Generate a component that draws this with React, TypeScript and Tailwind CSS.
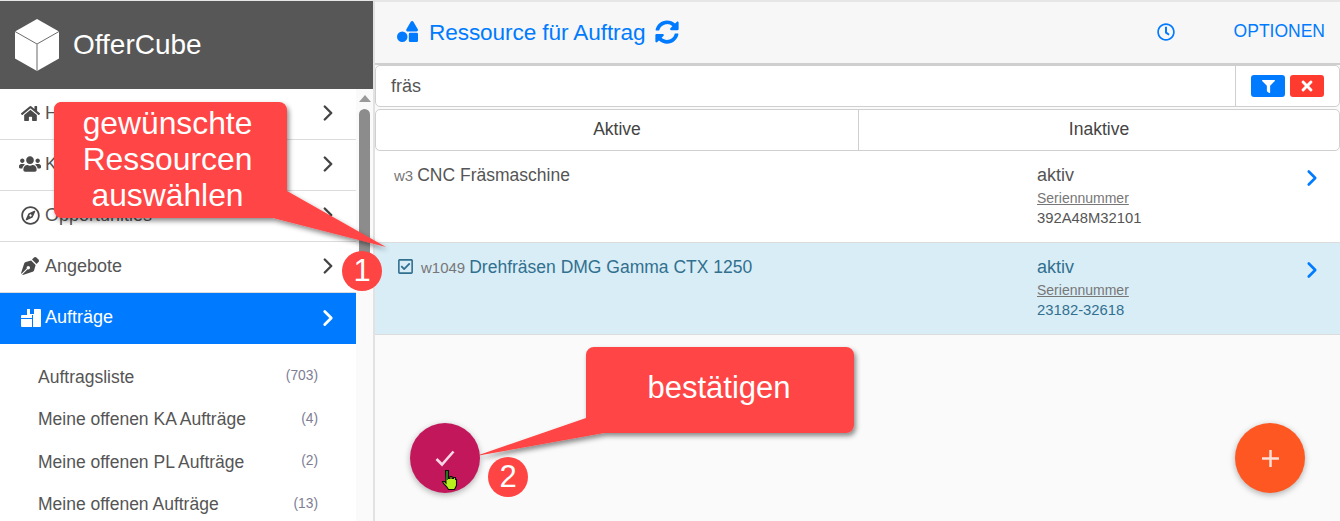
import { ChevronRight } from "lucide-react";
import {
    FaFilter,
    FaHome,
    FaPenNib,
    FaRegCheckSquare,
    FaRegClock,
    FaRegCompass,
    FaShapes,
    FaSyncAlt,
    FaTimes,
    FaUsers,
} from "react-icons/fa";

const CubeLogo = () => (
    <svg width="46" height="54" viewBox="0 0 46 54" className="shrink-0">
        <path d="M23 1 45 13.5V40.5L23 53 1 40.5V13.5Z" fill="#fff" />
        <path d="M1 13.5 23 26 45 13.5" fill="none" stroke="#6b6b6b" strokeWidth="1" />
        <path d="M23 26V53" fill="none" stroke="#a0a0a0" strokeWidth="1.6" />
    </svg>
);

const OrdersIcon = () => (
    <svg width="20" height="20" viewBox="0 0 20 20" className="shrink-0">
        <path d="M6 1h3v5h4V1h6a1 1 0 0 1 1 1v16a1 1 0 0 1-1 1h-7V7H6Z" fill="#fff" />
        <path d="M1 7h10v3H0V8a1 1 0 0 1 1-1Z" fill="#fff" />
        <path d="M0 11h11v8H1a1 1 0 0 1-1-1Z" fill="#fff" />
    </svg>
);

const HandCursor = () => (
    <svg width="17" height="22" viewBox="0 0 17 22" className="absolute left-[441px] top-[469px]">
        <path
            d="M4.5 1.5h3v8h1.5V7.5h2v2h1.500V8.500h2v2h1v6l-2 4H7.500l-2-3-3-3-1-2h2l1.500 1.500Z"
            fill="#b7f01c"
            stroke="#0c0c0c"
            strokeWidth="1.1"
        />
        <path d="M5 2h2v9H5Z" fill="#1f7a1f" />
    </svg>
);

const Annotations = () => (
    <svg width="1340" height="521" viewBox="0 0 1340 521" className="absolute left-0 top-0 pointer-events-none">
        <defs>
            <filter id="shade" x="-20%" y="-20%" width="140%" height="140%">
                <feDropShadow dx="2" dy="3" stdDeviation="2.500" floodColor="#000" floodOpacity="0.45" />
            </filter>
        </defs>
        <path
            d="M60 102h219a8 8 0 0 1 8 8v81L386 247 273 218H62a8 8 0 0 1-8-8v-100a8 8 0 0 1 6-8Z"
            fill="#ff4444"
            filter="url(#shade)"
        />
        <path
            d="M594 347h252a8 8 0 0 1 8 8v70a8 8 0 0 1-8 8H604L476 456 586 418V355a8 8 0 0 1 8-8Z"
            fill="#ff4444"
            filter="url(#shade)"
        />
    </svg>
);

const menu = [
    { label: "Home", icon: <FaHome size={19} /> },
    { label: "Kunden", icon: <FaUsers size={22} className="-ml-[2px] mr-[-1px]" /> },
    { label: "Opportunities", icon: <FaRegCompass size={19} /> },
    { label: "Angebote", icon: <FaPenNib size={18} /> },
];

const subMenu = [
    { label: "Auftragsliste", count: "(703)" },
    { label: "Meine offenen KA Aufträge", count: "(4)" },
    { label: "Meine offenen PL Aufträge", count: "(2)" },
    { label: "Meine offenen Aufträge", count: "(13)" },
];

const resources = [
    {
        code: "w3",
        name: "CNC Fräsmaschine",
        serial: "392A48M32101",
        selected: false,
    },
    {
        code: "w1049",
        name: "Drehfräsen DMG Gamma CTX 1250",
        serial: "23182-32618",
        selected: true,
    },
];

const App = () => {
    return (
        <div className="relative flex h-[521px] w-[1340px] overflow-hidden bg-[#fafafa] font-['Liberation_Sans',Arial,sans-serif] text-[#555]">
            <aside className="flex h-full w-[375px] shrink-0 flex-col border-r-2 border-[#e2e2e2] bg-white">
                <div className="flex h-[89px] shrink-0 items-center gap-[13px] border-t border-[#e6e6e6] bg-[#575757] pl-[14px] text-[28px] text-white">
                    <CubeLogo />
                    <span>OfferCube</span>
                </div>
                <div className="flex min-h-0 flex-1">
                    <nav className="w-[356px] shrink-0">
                        {menu.map((item) => (
                            <div
                                key={item.label}
                                className="flex h-[51px] items-center border-b border-[#dcdcdc] pb-[2px] pl-[21px] pr-[15px] text-[18px] text-[#555]"
                            >
                                <span className="flex w-[24px] shrink-0 text-[#4a4a4a]">{item.icon}</span>
                                <span className="flex-1">{item.label}</span>
                                <ChevronRight size={26} strokeWidth={2.2} className="text-[#444]" />
                            </div>
                        ))}
                        <div className="flex h-[51px] items-center bg-[#007bff] pb-[2px] pl-[21px] pr-[15px] text-[18px] text-white">
                            <span className="flex w-[24px] shrink-0">
                                <OrdersIcon />
                            </span>
                            <span className="flex-1">Aufträge</span>
                            <ChevronRight size={26} strokeWidth={2.6} />
                        </div>
                        <div className="pt-[11.5px]">
                            {subMenu.map((item) => (
                                <div
                                    key={item.label}
                                    className="flex h-[42.5px] items-center pl-[38px] pr-[38px] text-[17.5px] text-[#555]"
                                >
                                    <span className="flex-1">{item.label}</span>
                                    <span className="text-[13.8px] text-[#7d7d93]">{item.count}</span>
                                </div>
                            ))}
                        </div>
                    </nav>
                    <div className="flex flex-1 flex-col items-center bg-[#fafafa] pt-[6px]">
                        <div className="h-0 w-0 border-x-[6px] border-b-[7px] border-x-transparent border-b-[#9a9a9a]" />
                        <div className="mt-[7px] h-[160px] w-[11px] rounded-full bg-[#8c8c8c]" />
                    </div>
                </div>
            </aside>
            <main className="flex min-w-0 flex-1 flex-col">
                <header className="flex h-[65px] shrink-0 items-center border-y-2 border-b-[#cfcfcf] border-t-[#e6e6e6] bg-[#f7f7f7] pb-[2px] pl-[22px] pr-[15px] text-[#007bff]">
                    <FaShapes size={21} className="mr-[11px]" />
                    <span className="translate-y-[1px] text-[22.6px] tracking-[-0.1px]">Ressource für Auftrag</span>
                    <FaSyncAlt size={24} className="ml-[10px]" />
                    <FaRegClock size={18} className="ml-auto" />
                    <span className="ml-[59px] text-[17.5px]">OPTIONEN</span>
                </header>
                <div className="flex h-[42px] shrink-0 rounded-[5px] border border-[#cfcfcf] bg-white">
                    <div className="flex flex-1 items-center pl-[15px] text-[18px]">fräs</div>
                    <div className="flex w-[104px] items-center gap-[5px] border-l border-[#cfcfcf] pl-[15px]">
                        <span className="flex h-[22px] w-[34px] items-center justify-center rounded-[3px] bg-[#007bff] text-white">
                            <FaFilter size={13} />
                        </span>
                        <span className="flex h-[22px] w-[34px] items-center justify-center rounded-[3px] bg-[#ff3b30] text-white">
                            <FaTimes size={16} />
                        </span>
                    </div>
                </div>
                <div className="mt-[2px] flex h-[42px] shrink-0 rounded-[5px] border border-[#cfcfcf] bg-white text-[17.5px] text-[#444]">
                    <div className="flex w-[483px] items-center justify-center border-r border-[#cfcfcf] pb-[2px]">Aktive</div>
                    <div className="flex flex-1 items-center justify-center pb-[2px]">Inaktive</div>
                </div>
                {resources.map((row) => (
                    <div
                        key={row.code}
                        className={
                            row.selected
                                ? "flex h-[92px] shrink-0 border-b border-[#dcdcdc] bg-[#d9edf7] pl-[22px] pr-[15px] pt-[14px] text-[#31708f]"
                                : "flex h-[92px] shrink-0 border-b border-[#dcdcdc] bg-white pl-[19px] pr-[15px] pt-[14px] text-[#555]"
                        }
                    >
                        <div
                            className={
                                row.selected
                                    ? "flex w-[640px] items-center self-start whitespace-nowrap text-[17.5px] leading-[21px]"
                                    : "flex w-[643px] items-center self-start whitespace-nowrap text-[17.5px] leading-[21px]"
                            }
                        >
                            {row.selected && <FaRegCheckSquare size={17} className="mr-[7px] -mt-[3px]" />}
                            <span className="mr-[4px] text-[15px] text-[#777]">{row.code}</span>
                            <span>{row.name}</span>
                        </div>
                        <div className="flex-1">
                            <div className="text-[18px] leading-[21px]">aktiv</div>
                            <div className="mt-[3px] text-[14px] leading-[18px] text-[#777] underline">Seriennummer</div>
                            <div className="mt-[1px] text-[14.8px] leading-[20px]">{row.serial}</div>
                        </div>
                        <ChevronRight size={26} strokeWidth={2.4} className="text-[#007bff]" />
                    </div>
                ))}
            </main>
            <Annotations />
            <div className="absolute left-[54px] top-[104.5px] w-[227px] text-center text-[31.8px] leading-[36.4px] text-white">
                gewünschte Ressourcen auswählen
            </div>
            <div className="absolute left-[342px] top-[251px] flex h-[40px] w-[40px] items-center justify-center rounded-full bg-[#ff4444] text-[31px] text-white">
                1
            </div>
            <div className="absolute left-[586px] top-[370px] w-[266px] text-center text-[31px] leading-[36px] text-white">
                bestätigen
            </div>
            <button className="absolute left-[410px] top-[423px] flex h-[70px] w-[70px] items-center justify-center rounded-full bg-[#c2185b] text-[#f8d7e6] shadow-[0_2px_6px_rgba(0,0,0,0.3)]">
                <svg width="20" height="17" viewBox="0 0 20 17" fill="none" stroke="currentColor" strokeWidth="2.600">
                    <path d="M1.500 9 7 14.500 18.500 1.500" />
                </svg>
            </button>
            <HandCursor />
            <div className="absolute left-[488px] top-[457px] flex h-[40px] w-[40px] items-center justify-center rounded-full bg-[#ff4444] text-[31px] text-white">
                2
            </div>
            <button className="absolute left-[1235px] top-[423px] flex h-[70px] w-[70px] items-center justify-center rounded-full bg-[#ff5722] text-[#fde0d6] shadow-[0_2px_6px_rgba(0,0,0,0.3)]">
                <svg width="17" height="17" viewBox="0 0 17 17" fill="none" stroke="currentColor" strokeWidth="2.500">
                    <path d="M8.500 0V17M0 8.500H17" />
                </svg>
            </button>
        </div>
    );
};

export default App;
